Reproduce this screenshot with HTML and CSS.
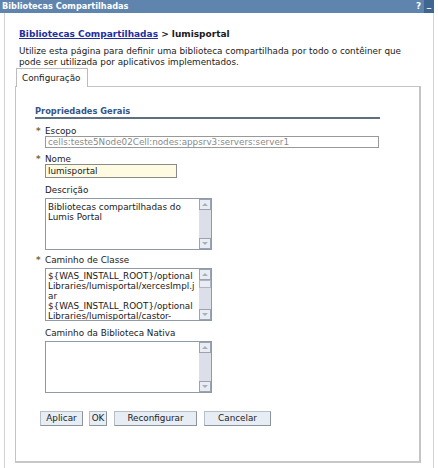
FILE: index.html
```html
<!DOCTYPE html>
<html lang="pt">
<head>
<meta charset="utf-8">
<title>Bibliotecas Compartilhadas</title>
<link rel="stylesheet" href="styles.css">
</head>
<body>
<div class="window">
  <div class="titlebar">
    <span class="title">Bibliotecas Compartilhadas</span>
    <span class="tbtns"><span class="tbtn">?</span><span class="tbtn min">_</span></span>
  </div>
  <div class="content">
    <div class="crumb"><a class="crumb-link" href="#">Bibliotecas Compartilhadas</a> &gt; lumisportal</div>
    <p class="intro">Utilize esta página para definir uma biblioteca compartilhada por todo o contêiner que pode ser utilizada por aplicativos implementados.</p>
    <div class="tabs"><div class="tab">Configuração</div></div>
    <div class="panel">
      <div class="section">Propriedades Gerais</div>

      <div class="field f-escopo">
        <div class="label"><span class="req">*</span>Escopo</div>
        <div class="input ro">cells:teste5Node02Cell:nodes:appsrv3:servers:server1</div>
      </div>

      <div class="field f-nome">
        <div class="label"><span class="req">*</span>Nome</div>
        <div class="input name">lumisportal</div>
      </div>

      <div class="field f-desc">
        <div class="label">Descrição</div>
        <div class="textarea">
          <div class="ta-text wrap">Bibliotecas compartilhadas do Lumis Portal</div>
          <div class="sb"><span class="sbb up"></span><span class="sbt"></span><span class="sbb dn"></span></div>
        </div>
      </div>

      <div class="field f-class">
        <div class="label"><span class="req">*</span>Caminho de Classe</div>
        <div class="textarea tall">
          <div class="ta-text">${WAS_INSTALL_ROOT}/optional<br>Libraries/lumisportal/xercesImpl.j<br>ar<br>${WAS_INSTALL_ROOT}/optional<br>Libraries/lumisportal/castor-</div>
          <div class="sb"><span class="sbb up"></span><span class="sbt"><span class="thumb"></span></span><span class="sbb dn"></span></div>
        </div>
      </div>

      <div class="field f-nat">
        <div class="label">Caminho da Biblioteca Nativa</div>
        <div class="textarea">
          <div class="ta-text"></div>
          <div class="sb"><span class="sbb up"></span><span class="sbt"></span><span class="sbb dn"></span></div>
        </div>
      </div>

      <div class="buttons">
        <span class="btn b-apl">Aplicar</span>
        <span class="btn b-ok">OK</span>
        <span class="btn b-rec">Reconfigurar</span>
        <span class="btn b-can">Cancelar</span>
      </div>
    </div>
  </div>
</div>
</body>
</html>
```

FILE: styles.css
```css
html, body {
  margin: 0;
  padding: 0;
  background: #ffffff;
}
body {
  font-family: "DejaVu Sans", Verdana, sans-serif;
  font-size: 8.8px;
  color: #1a1a1a;
}
.window {
  width: 428px;
  margin-left: 4px;
  height: 468px;
  border-left: 1px solid #d4d4d4;
  border-right: 1px solid #d4d4d4;
}
.titlebar {
  margin-left: -5px;
  width: 434px;
  height: 13px;
  background: #5f84ae;
  display: flex;
  align-items: center;
  justify-content: space-between;
}
.title {
  color: #ffffff;
  font-weight: bold;
  font-size: 8.2px;
  padding-left: 2px;
  line-height: 13px;
}
.tbtns {
  display: flex;
  gap: 1px;
  height: 13px;
}
.tbtn {
  width: 9px;
  height: 13px;
  color: #ffffff;
  font-weight: bold;
  line-height: 13px;
  text-align: center;
}
.tbtn.min {
  background: #3f6591;
  width: 10px;
  line-height: 9px;
}
.content {
  padding-left: 10px;
}
.crumb {
  margin-top: 15px;
  margin-left: 4px;
  font-weight: bold;
  font-size: 9px;
  line-height: 12px;
}
.crumb-link {
  color: #1f2fa0;
  text-decoration: underline;
}
.intro {
  margin: 6px 0 0 4px;
  width: 395px;
  line-height: 11px;
}
.tabs {
  display: flex;
}
.tab {
  margin-left: 1px;
  width: 72px;
  height: 19px;
  border: 1px solid #bcbcbc;
  border-bottom: none;
  line-height: 19px;
  padding-left: 5px;
  box-sizing: border-box;
  background: #ffffff;
  margin-bottom: -1px;
  position: relative;
  z-index: 1;
}
.panel {
  width: 406px;
  height: 377px;
  box-sizing: border-box;
  border: 1px solid #c4c4c4;
  border-right: 2px solid #c4c4c4;
  border-bottom: 2px solid #c8c8c8;
  padding-left: 19px;
  padding-top: 19px;
}
.section {
  width: 345px;
  color: #345585;
  font-weight: bold;
  font-size: 8.3px;
  line-height: 11px;
  border-bottom: 2px solid #5c7080;
}
.field {
  padding-left: 10px;
}
.label {
  line-height: 10px;
  position: relative;
}
.req {
  position: absolute;
  left: -9px;
  top: 0;
  color: #7a6a2e;
  font-weight: bold;
}
.f-escopo { margin-top: 7px; }
.f-nome { margin-top: 6px; }
.f-desc { margin-top: 7px; }
.f-class { margin-top: 5px; }
.f-nat { margin-top: 7px; }
.input {
  height: 12px;
  box-sizing: border-box;
  border: 1px solid #999999;
  line-height: 10px;
  padding-left: 2px;
  white-space: nowrap;
  overflow: hidden;
}
.input.ro {
  width: 334px;
  color: #8a8a8a;
}
.input.name {
  width: 132px;
  height: 14px;
  line-height: 12px;
  border-color: #8a8a8a;
  background: #fffbe3;
}
.textarea {
  margin-top: 3px;
  width: 167px;
  height: 52px;
  box-sizing: border-box;
  border: 1px solid #8e9aa6;
  display: flex;
}
.textarea.tall {
  height: 53px;
}
.ta-text {
  flex: 1;
  padding: 2px 0 0 2px;
  line-height: 10px;
  overflow: hidden;
  white-space: nowrap;
}
.ta-text.wrap {
  white-space: normal;
  padding-top: 3px;
}
.sb {
  width: 12px;
  display: flex;
  flex-direction: column;
  background: #dcdfea;
}
.sbt {
  flex: 1;
  position: relative;
}
.sbb {
  height: 11px;
  box-sizing: border-box;
  border: 1px solid #9aa3b0;
  background: #e9ecf2;
  position: relative;
}
.sbb::after {
  content: "";
  position: absolute;
  left: 2px;
  width: 0;
  height: 0;
  border-left: 3px solid transparent;
  border-right: 3px solid transparent;
}
.sbb.up::after {
  top: 3px;
  border-bottom: 3px solid #a8b0bc;
}
.sbb.dn::after {
  top: 3px;
  border-top: 3px solid #a8b0bc;
}
.thumb {
  position: absolute;
  left: 0;
  top: 0;
  width: 12px;
  height: 8px;
  box-sizing: border-box;
  border: 1px solid #b0b6c0;
  background: #e9ecf2;
}
.buttons {
  margin-top: 18px;
  display: flex;
  align-items: center;
  margin-left: 5px;
}
.btn {
  height: 15px;
  box-sizing: border-box;
  border: 1px solid #b8bec8;
  border-right-color: #8d949e;
  border-bottom-color: #8d949e;
  background: #e6edf5;
  line-height: 13px;
  text-align: center;
  color: #222;
}
.b-apl { width: 43px; }
.b-ok { width: 18px; margin-left: 6px; }
.b-rec { width: 83px; margin-left: 7px; }
.b-can { width: 67px; margin-left: 7px; }
```
